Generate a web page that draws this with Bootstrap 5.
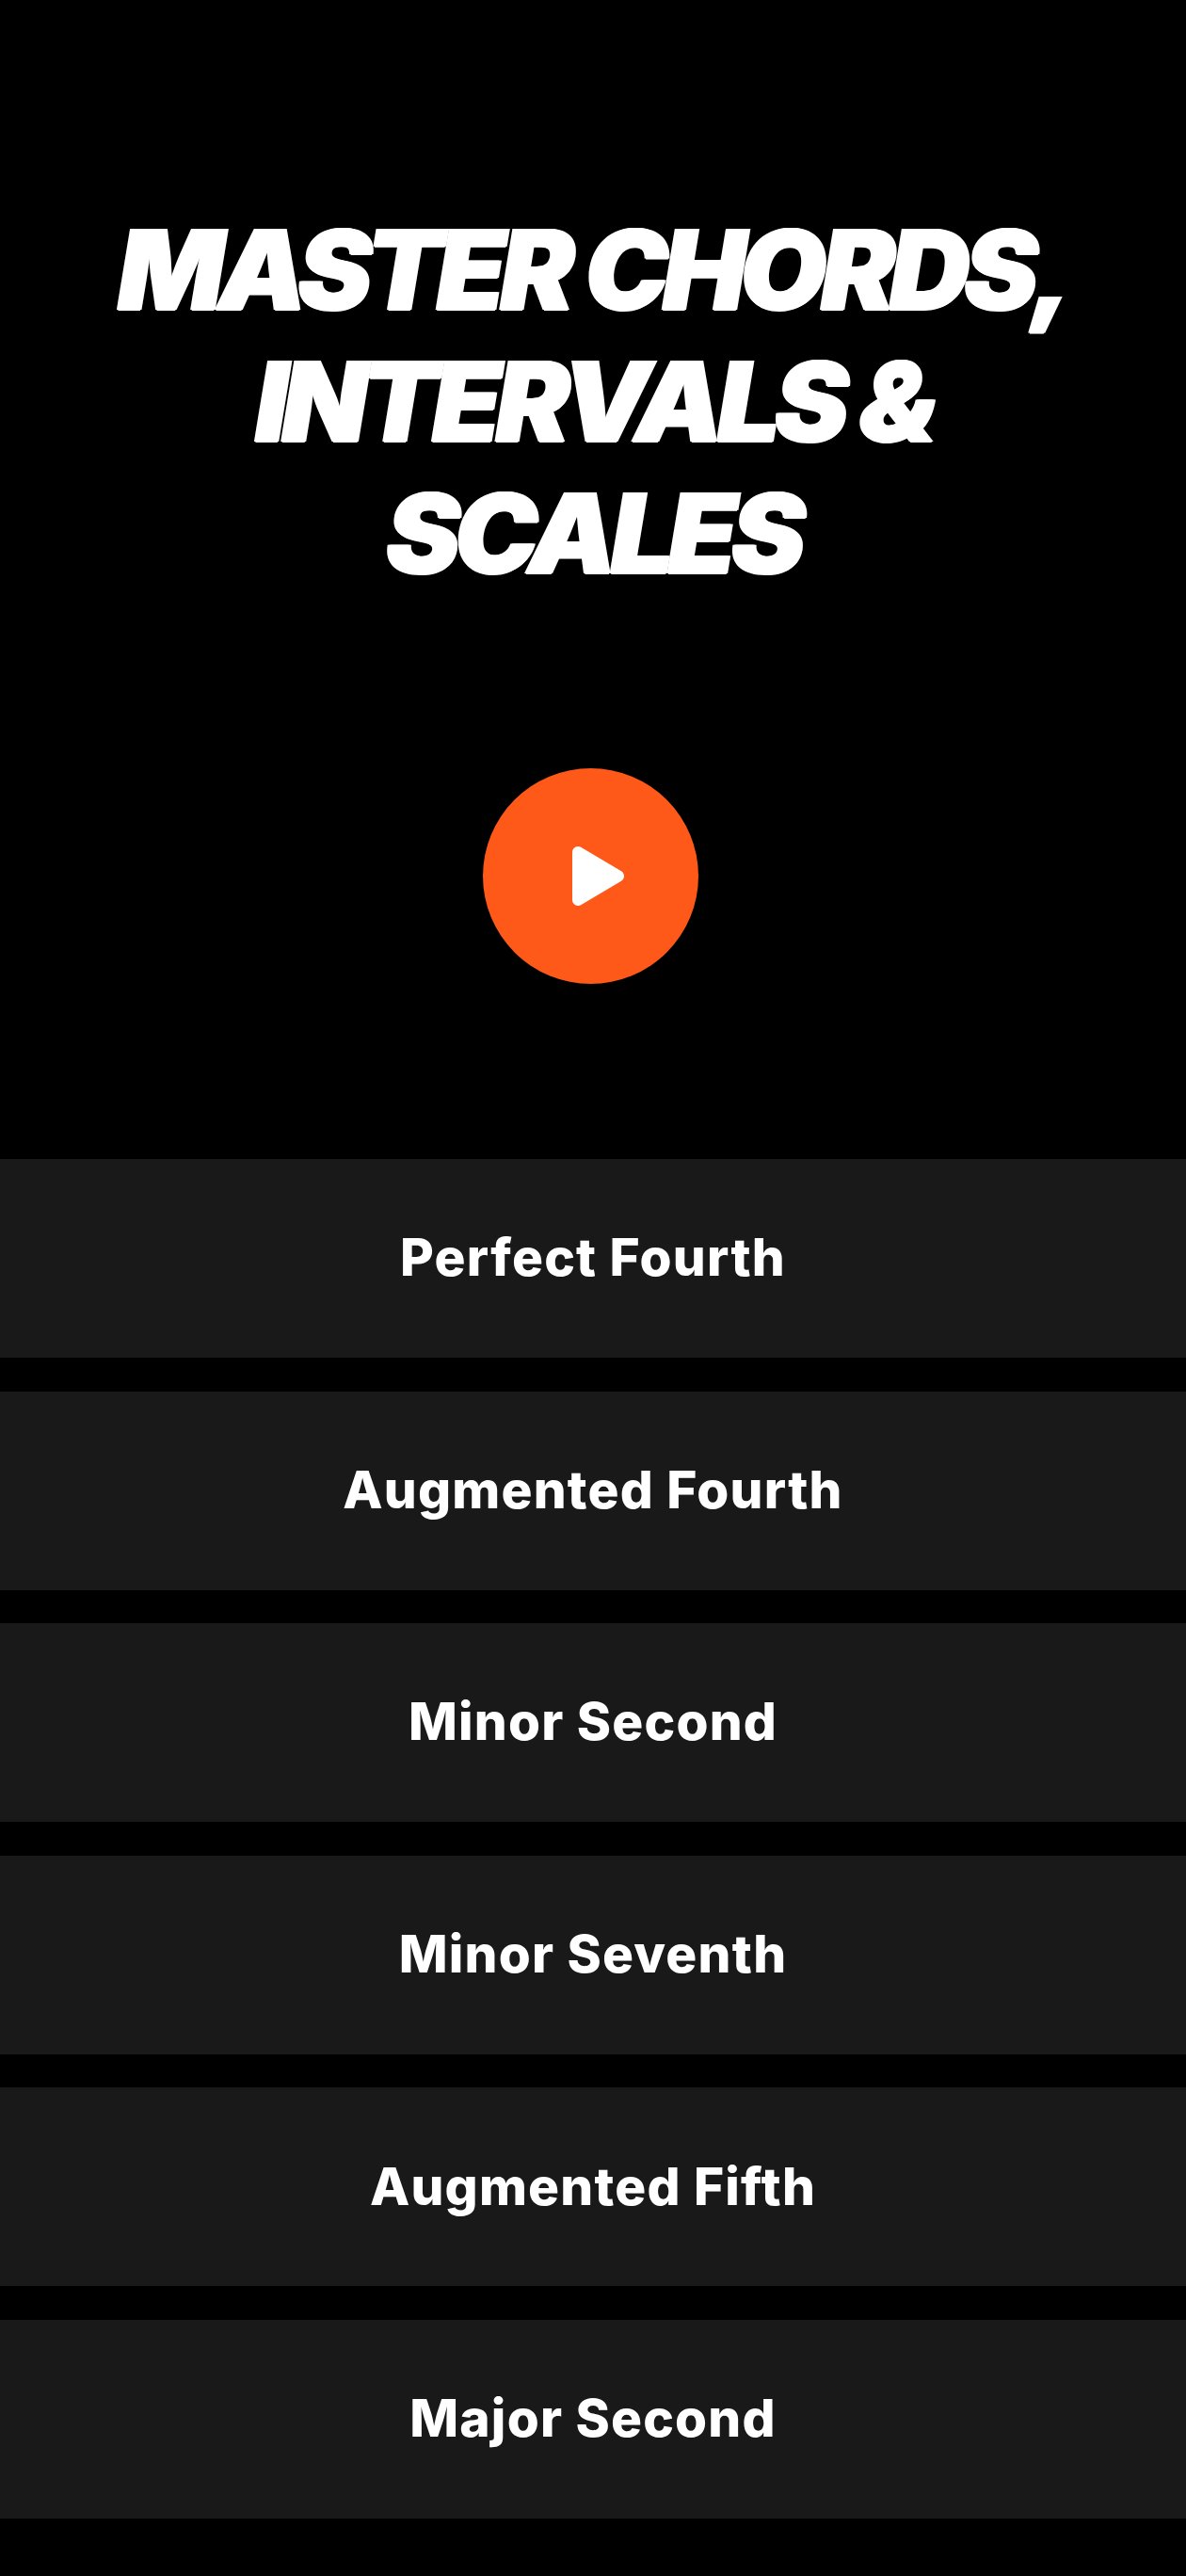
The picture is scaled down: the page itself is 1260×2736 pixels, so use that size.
<!DOCTYPE html>
<html lang="en">
<head>
    <meta charset="UTF-8">
    <title>Master Chords</title>
    <link href="https://cdn.jsdelivr.net/npm/bootstrap@5.3.0/dist/css/bootstrap.min.css" rel="stylesheet">
    <style>
        body { background: #000; font-family: Inter, "Liberation Sans", sans-serif; }
        .hero-title {
            margin: 0;
            padding-top: 216px;
            font-family: Inter, "Liberation Sans", sans-serif;
            font-size: 118px;
            line-height: 140px;
            font-weight: 900;
            font-style: italic;
            letter-spacing: -6px;
            text-shadow: 1.500px 0 0 #fff, -1.500px 0 0 #fff, 0 1px 0 #fff;
            color: #fff;
        }
        .play-wrap { padding-top: 180px; padding-bottom: 186px; padding-right: 6px; }
        .play-btn { width: 229px; height: 229px; background: #fe5919; border: 0; }
        .play-btn:hover, .play-btn:active { background: #fe5919 !important; }
        .play-btn svg { width: 55px; height: 63px; margin-left: 16px; }
        .answer-list { gap: 35.6px; }
        .answer-item {
            height: 211px;
            padding-bottom: 8px;
            background: #191919;
            color: #fff;
            border: 0;
            border-radius: 0;
            font-family: Inter, "Liberation Sans", sans-serif;
            font-size: 55px;
            font-weight: 800;
            letter-spacing: 1.2px;
        }
        .answer-item:hover, .answer-item:active { background: #191919 !important; color: #fff !important; }
    </style>
</head>
<body>

<h1 class="hero-title text-center">MASTER CHORDS,<br>INTERVALS &amp;<br>SCALES</h1>

<div class="play-wrap d-flex justify-content-center">
    <button class="play-btn btn rounded-circle d-flex align-items-center justify-content-center p-0" type="button" aria-label="Play">
        <svg viewBox="0 0 55 63"><polygon points="6,6 49,31.500 6,57" fill="#fff" stroke="#fff" stroke-width="12" stroke-linejoin="round"/></svg>
    </button>
</div>

<div class="answer-list d-flex flex-column">
    <button class="answer-item btn w-100" type="button">Perfect Fourth</button>
    <button class="answer-item btn w-100" type="button">Augmented Fourth</button>
    <button class="answer-item btn w-100" type="button">Minor Second</button>
    <button class="answer-item btn w-100" type="button">Minor Seventh</button>
    <button class="answer-item btn w-100" type="button">Augmented Fifth</button>
    <button class="answer-item btn w-100" type="button">Major Second</button>
</div>

<script src="https://cdn.jsdelivr.net/npm/bootstrap@5.3.0/dist/js/bootstrap.bundle.min.js"></script>
</body>
</html>
